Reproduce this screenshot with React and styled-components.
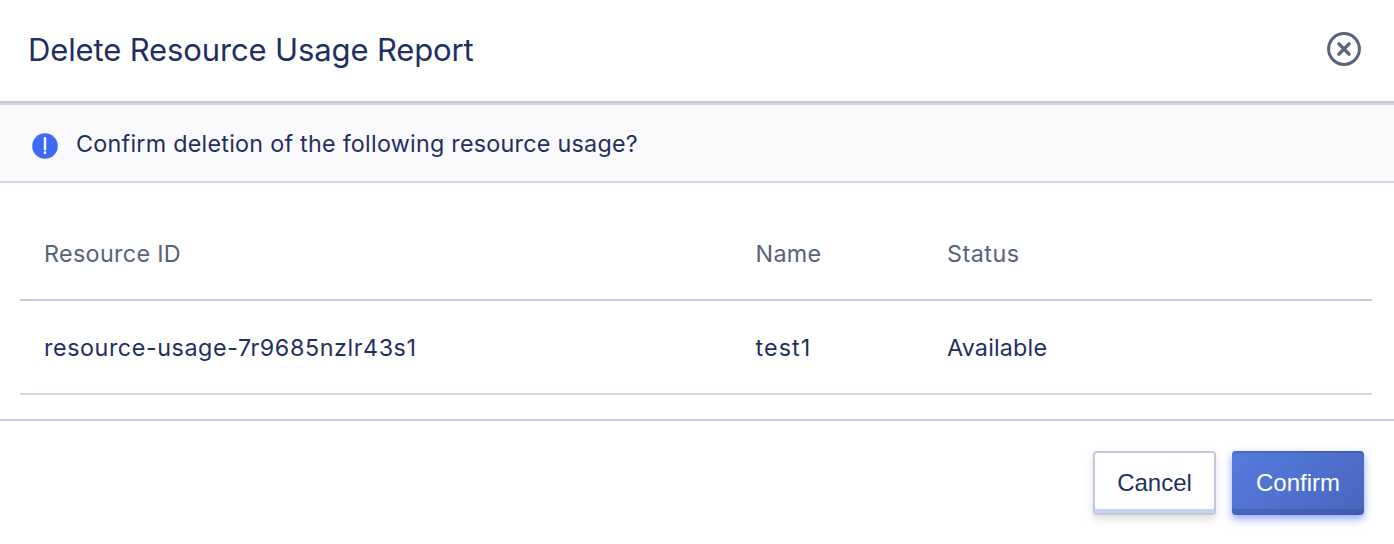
import React from "react";
import styled, { createGlobalStyle } from "styled-components";

const GlobalStyle = createGlobalStyle`
  *, *::before, *::after { box-sizing: border-box; }
  body { margin: 0; background: #fff; }
`;

const Dialog = styled.section`
  display: flex;
  flex-direction: column;
  width: 1394px;
  height: 544px;
  background: #fff;
  color: #1f2f62;
  font-family: Inter, "Liberation Sans", sans-serif;
  font-size: 23.3px;
  font-weight: 400;
  overflow: hidden;
`;

const Header = styled.header`
  display: flex;
  align-items: center;
  justify-content: space-between;
  height: 103px;
  padding: 0 32px 3px 28px;
  border-bottom: 2px solid #c3c8da;
`;

const Title = styled.h1`
  margin: 2px 0 0;
  font-size: 31px;
  font-weight: 400;
  line-height: 40px;
  letter-spacing: -0.13px;
`;

const CloseButton = styled.button`
  display: flex;
  padding: 0;
  border: 0;
  background: none;
  color: #56637a;
`;

const Notice = styled.div`
  display: flex;
  align-items: center;
  gap: 18px;
  height: 80px;
  padding: 6px 32px 0;
  background: #fafafc;
  border-top: 2px solid #d3d6ea;
  border-bottom: 2px solid #d3d6ea;
`;

const NoticeText = styled.p`
  margin: 0 0 4px;
  line-height: 32px;
  letter-spacing: 0.26px;
`;

const Body = styled.div`
  padding: 24px 22px 24px 20px;
`;

const Row = styled.div`
  display: grid;
  grid-template-columns: 711.5px 191.5px 1fr;
  align-items: center;
  height: 94px;
  padding: 2px 0 0 24px;
  color: ${(p) => p.$color};
  border-bottom: 2px solid ${(p) => p.$line};
`;

const Cell = styled.span`
  line-height: 32px;
  letter-spacing: ${(p) => p.$spacing ?? 0.35}px;
`;

const Footer = styled.footer`
  display: flex;
  flex: 1;
  align-items: flex-start;
  justify-content: flex-end;
  gap: 16px;
  padding: 30px 30px 0 0;
  border-top: 2px solid #c5c8da;
`;

const Button = styled.button`
  width: 123px;
  height: 64px;
  padding: 0 0 1px;
  border: 2px solid #c5c8da;
  border-radius: 4px;
  background: #fff;
  box-shadow: inset 0 -4px 0 #c4d4f7, 0 4px 8px rgba(0, 0, 0, 0.14);
  color: #1f2f62;
  font: 24px "Liberation Sans", Arial, sans-serif;
`;

const PrimaryButton = styled(Button)`
  width: 132px;
  border: 0;
  background: linear-gradient(135deg, #567be0, #4866bd);
  box-shadow: inset 0 2px 0 rgba(48, 72, 140, 0.35),
    inset 0 -6px 0 rgba(48, 72, 140, 0.35), 0 4px 8px rgba(72, 112, 235, 0.6);
  color: #fff;
`;

function CloseIcon() {
  return (
    <svg width="36" height="36" viewBox="0 0 36 36" fill="none" stroke="currentColor">
      <circle cx="18" cy="18" r="15.4" strokeWidth="3" />
      <path
        d="M12.9 12.9 23.1 23.1M23.1 12.9 12.9 23.1"
        strokeWidth="3.4"
        strokeLinecap="round"
      />
    </svg>
  );
}

function AlertIcon() {
  return (
    <svg width="26" height="26" viewBox="0 0 26 26">
      <circle cx="13" cy="13" r="12.8" fill="#3d6bf8" />
      <path d="M13 5.2V16.2" stroke="#fff" strokeWidth="2.4" strokeLinecap="round" />
      <circle cx="13" cy="19.7" r="1.4" fill="#fff" />
    </svg>
  );
}

export default function App() {
  return (
    <>
      <GlobalStyle />
      <Dialog role="dialog" aria-label="Delete Resource Usage Report">
        <Header>
          <Title>Delete Resource Usage Report</Title>
          <CloseButton aria-label="Close">
            <CloseIcon />
          </CloseButton>
        </Header>
        <Notice>
          <AlertIcon />
          <NoticeText>Confirm deletion of the following resource usage?</NoticeText>
        </Notice>
        <Body>
          <Row $color="#56637a" $line="#c5c8da">
            <Cell>Resource ID</Cell>
            <Cell>Name</Cell>
            <Cell $spacing={0.5}>Status</Cell>
          </Row>
          <Row $color="#1f2f62" $line="#d3d6ea">
            <Cell $spacing={0.58}>resource-usage-7r9685nzlr43s1</Cell>
            <Cell $spacing={1.1}>test1</Cell>
            <Cell $spacing={0.2}>Available</Cell>
          </Row>
        </Body>
        <Footer>
          <Button>Cancel</Button>
          <PrimaryButton>Confirm</PrimaryButton>
        </Footer>
      </Dialog>
    </>
  );
}
